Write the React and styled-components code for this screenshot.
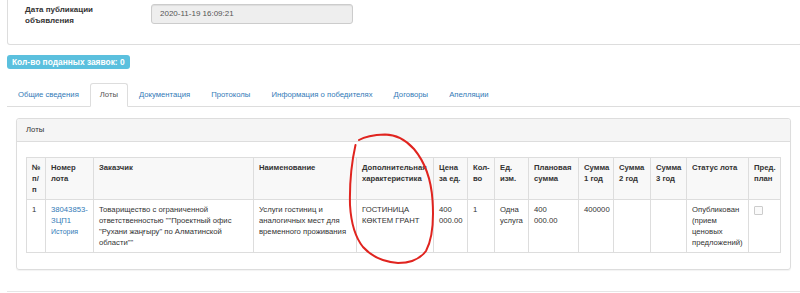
import React from 'react'
import styled, { createGlobalStyle } from 'styled-components'

const GlobalStyle = createGlobalStyle`
  body {
    margin: 0;
    background: #fff;
    font-family: 'Liberation Sans', Arial, sans-serif;
    font-size: 7.7px;
    line-height: 11px;
    color: #333;
  }
`

const Page = styled.div`
  position: relative;
  width: 800px;
  height: 293px;
  overflow: hidden;
  padding: 0 0 0 7px;
  box-sizing: border-box;
`

const InfoPanel = styled.div`
  height: 45px;
  box-sizing: border-box;
  border: 1px solid #ddd;
  border-top: none;
  border-radius: 0 0 3px 3px;
  padding: 4px 0 0 17px;
  margin-right: -2px;
`

const FormRow = styled.div`
  display: flex;
  align-items: flex-start;
`

const Label = styled.div`
  width: 126px;
  font-weight: bold;
  font-size: 8px;
`

const Input = styled.div`
  width: 202px;
  height: 20px;
  box-sizing: border-box;
  background: #eee;
  border: 1px solid #ccc;
  border-radius: 3px;
  box-shadow: inset 0 1px 1px rgba(0, 0, 0, 0.075);
  color: #555;
  padding: 0 8px;
  line-height: 18px;
  font-size: 8px;
`

const Badge = styled.div`
  width: fit-content;
  margin-top: 10px;
  height: 14px;
  line-height: 14px;
  padding: 0 5px;
  background: #5bc0de;
  color: #fff;
  font-weight: bold;
  font-size: 8.4px;
  border-radius: 3px;
`

const Tabs = styled.ul`
  display: flex;
  list-style: none;
  margin: 14px -2px 0 0;
  padding: 0;
  border-bottom: 1px solid #ddd;
  height: 23px;
`

const Tab = styled.li`
  margin-right: 1px;
  margin-bottom: -1px;
  height: 24px;
  box-sizing: border-box;
  padding: 0 9px 0 ${p => (p.$first ? 10 : 9)}px;
  line-height: 22px;
  font-size: 7.7px;
  color: ${p => (p.$active ? '#555' : '#337ab7')};
  background: ${p => (p.$active ? '#fff' : 'transparent')};
  border: 1px solid ${p => (p.$active ? '#ddd' : 'transparent')};
  border-bottom-color: ${p => (p.$active ? '#fff' : 'transparent')};
  border-radius: 3px 3px 0 0;
  white-space: nowrap;
`

const LotsPanel = styled.div`
  margin: 11px 9px 0 9px;
  border: 1px solid #ddd;
  border-radius: 3px;
  box-shadow: 0 1px 1px rgba(0, 0, 0, 0.05);
`

const PanelHeading = styled.div`
  height: 23px;
  box-sizing: border-box;
  line-height: 22px;
  padding: 0 9px;
  background: #f5f5f5;
  border-bottom: 1px solid #ddd;
  border-radius: 3px 3px 0 0;
`

const PanelBody = styled.div`
  padding: 15px 9px 16px 9px;
`

const Table = styled.table`
  width: 755px;
  table-layout: fixed;
  border-collapse: collapse;
  border: 1px solid #ddd;
`

const Th = styled.th`
  text-align: left;
  vertical-align: top;
  font-weight: bold;
  padding: 4px 5px;
  border: 1px solid #ddd;
  background: #f8f8f8;
`

const Td = styled.td`
  vertical-align: top;
  padding: 4px ${p => (p.$tight ? 14 : 5)}px 4px 5px;
  border: 1px solid #ddd;
`

const Link = styled.a`
  color: #337ab7;
  text-decoration: none;
  font-size: ${p => (p.$small ? '7px' : '7.7px')};
  display: ${p => (p.$small ? 'block' : 'inline')};
`

const Check = styled.span`
  display: inline-block;
  width: 7px;
  height: 7px;
  margin-top: 2px;
  border: 1px solid #ccc;
  border-radius: 1px;
  background: #fafafa;
`

const BottomLine = styled.div`
  margin-top: 21px;
  border-top: 1px solid #e6e6e6;
`

const Annotation = styled.svg`
  position: absolute;
  left: 0;
  top: 0;
  pointer-events: none;
`

const widths = [19, 48, 160, 103, 77, 34, 27, 34, 50, 35, 37, 36, 62, 32]
const headers = [
  '№ п/ п', 'Номер лота', 'Заказчик', 'Наименование', 'Дополнительная характеристика',
  'Цена за ед.', 'Кол-во', 'Ед. изм.', 'Плановая сумма', 'Сумма 1 год',
  'Сумма 2 год', 'Сумма 3 год', 'Статус лота', 'Пред. план',
]
const tabs = ['Общие сведения', 'Лоты', 'Документация', 'Протоколы', 'Информация о победителях', 'Договоры', 'Апелляции']

export default function App() {
  return (
    <>
      <GlobalStyle />
      <Page>
        <InfoPanel>
          <FormRow>
            <Label>Дата публикации<br />объявления</Label>
            <Input>2020-11-19 16:09:21</Input>
          </FormRow>
        </InfoPanel>
        <Badge>Кол-во поданных заявок: 0</Badge>
        <Tabs>
          {tabs.map((t, i) => (
            <Tab key={t} $first={i === 0} $active={t === 'Лоты'}>{t}</Tab>
          ))}
        </Tabs>
        <LotsPanel>
          <PanelHeading>Лоты</PanelHeading>
          <PanelBody>
            <Table>
              <colgroup>
                {widths.map((w, i) => <col key={i} style={{ width: w }} />)}
              </colgroup>
              <thead>
                <tr>
                  {headers.map(h => <Th key={h}>{h}</Th>)}
                </tr>
              </thead>
              <tbody>
                <tr>
                  <Td>1</Td>
                  <Td>
                    <Link href="#">38043853-ЗЦП1</Link>
                    <Link href="#" $small>История</Link>
                  </Td>
                  <Td>Товарищество с ограниченной ответственностью ""Проектный офис "Рухани жаңғыру" по Алматинской области""</Td>
                  <Td>Услуги гостиниц и аналогичных мест для временного проживания</Td>
                  <Td>ГОСТИНИЦА КӨКТЕМ ГРАНТ</Td>
                  <Td>400 000.00</Td>
                  <Td>1</Td>
                  <Td>Одна услуга</Td>
                  <Td $tight>400 000.00</Td>
                  <Td>400000</Td>
                  <Td></Td>
                  <Td></Td>
                  <Td>Опубликован (прием ценовых предложений)</Td>
                  <Td><Check /></Td>
                </tr>
              </tbody>
            </Table>
          </PanelBody>
        </LotsPanel>
        <BottomLine />
        <Annotation width="800" height="293" viewBox="0 0 800 293">
          <path
            d="M359 140 C364 137 372 135 385 134.5 C396 134.5 405 139 414 149 C424 161 431 178 432.5 200 C434 222 432 240 426 251 C420 259 410 263 398 263 C384 262 372 257 363 247 C355 237 351 222 350 205 C349.5 185 351 165 355.5 145"
            fill="none"
            stroke="#e0241f"
            strokeWidth="2"
            strokeLinecap="round"
          />
        </Annotation>
      </Page>
    </>
  )
}
